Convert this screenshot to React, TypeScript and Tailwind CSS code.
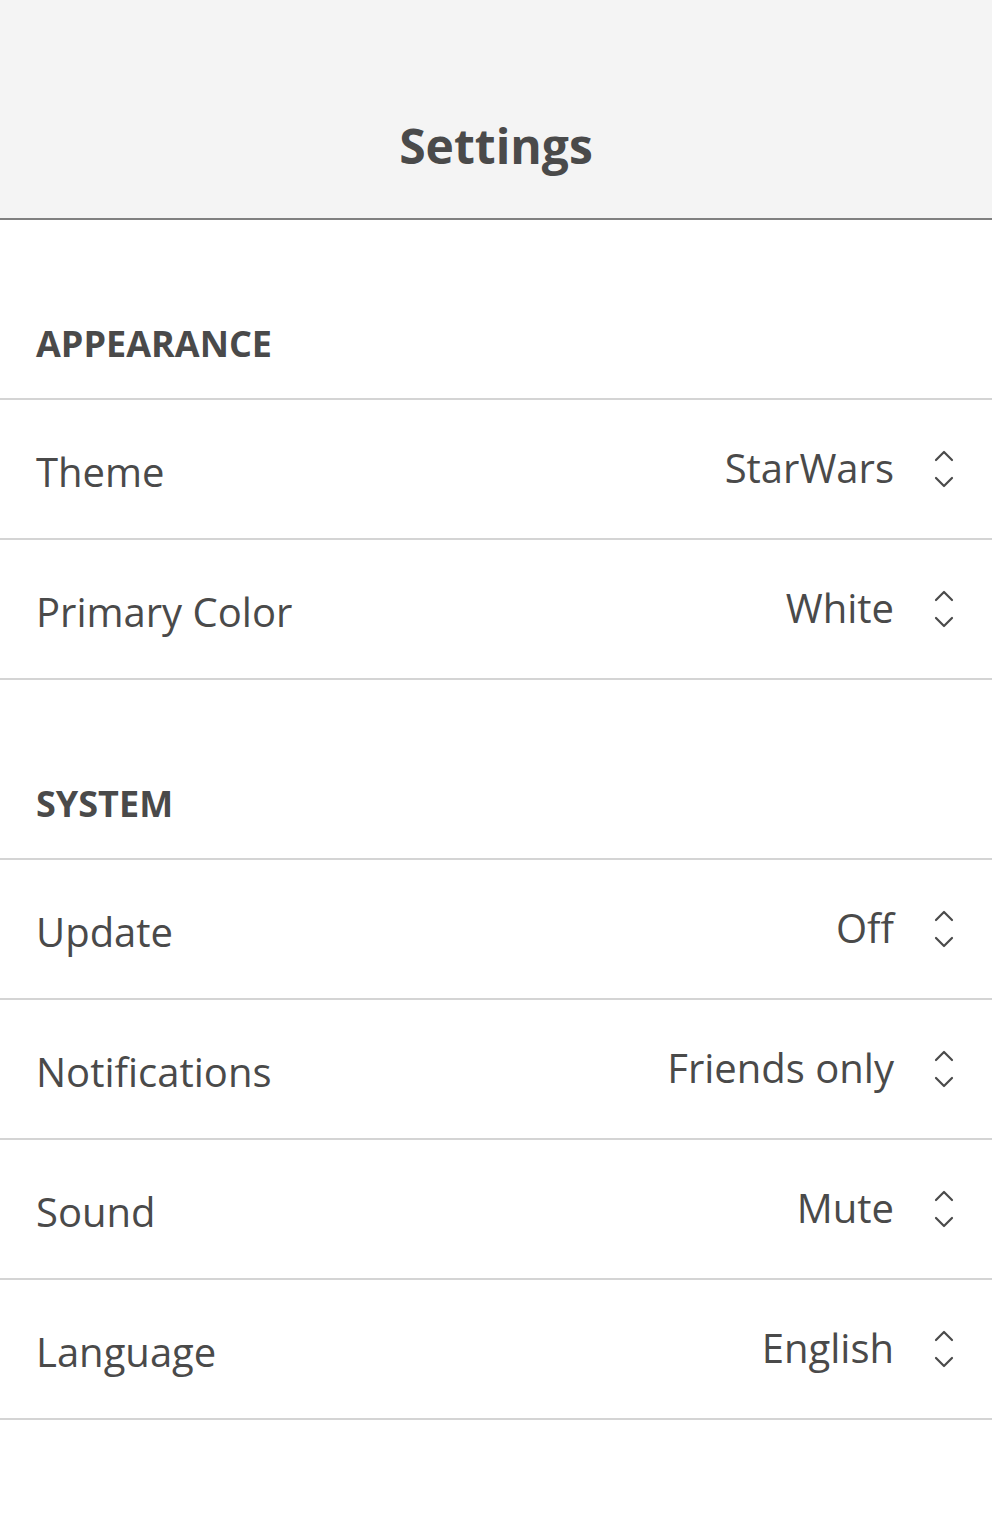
import React from "react";

const Chevrons = () => (
  <svg width="20" height="40" viewBox="0 0 20 40" fill="none" stroke="#4a4a4a" strokeWidth="2.2" strokeLinecap="round" strokeLinejoin="round">
    <path d="M2 11 L10 3 L18 11" />
    <path d="M2 29 L10 37 L18 29" />
  </svg>
);

const Row = ({ label, value }: { label: string; value: string }) => (
  <div className="flex h-[140px] items-center justify-between border-b-2 border-[#d4d4d4] pl-[36px] pr-[38px]">
    <span className="text-[40px] leading-none text-[#4a4a4a] pt-[6px]">{label}</span>
    <div className="flex items-center gap-[40px]">
      <span className="text-[40px] leading-none text-[#4a4a4a] pb-[2px]">{value}</span>
      <Chevrons />
    </div>
  </div>
);

const Section = ({ title }: { title: string }) => (
  <div className="flex h-[180px] items-end border-b-2 border-[#d4d4d4] pl-[36px] pb-[36px]">
    <span className="text-[36px] font-bold leading-none text-[#4a4a4a]">{title}</span>
  </div>
);

export default function App() {
  return (
    <div className="min-h-[1520px] w-full bg-white" style={{ fontFamily: '"Open Sans", sans-serif' }}>
      <header className="flex h-[220px] items-center justify-center border-b-2 border-[#808080] bg-[#f4f4f4] pt-[74px]">
        <h1 className="text-[48px] font-bold text-[#4a4a4a] leading-none">Settings</h1>
      </header>
      <Section title="APPEARANCE" />
      <Row label="Theme" value="StarWars" />
      <Row label="Primary Color" value="White" />
      <Section title="SYSTEM" />
      <Row label="Update" value="Off" />
      <Row label="Notifications" value="Friends only" />
      <Row label="Sound" value="Mute" />
      <Row label="Language" value="English" />
    </div>
  );
}
